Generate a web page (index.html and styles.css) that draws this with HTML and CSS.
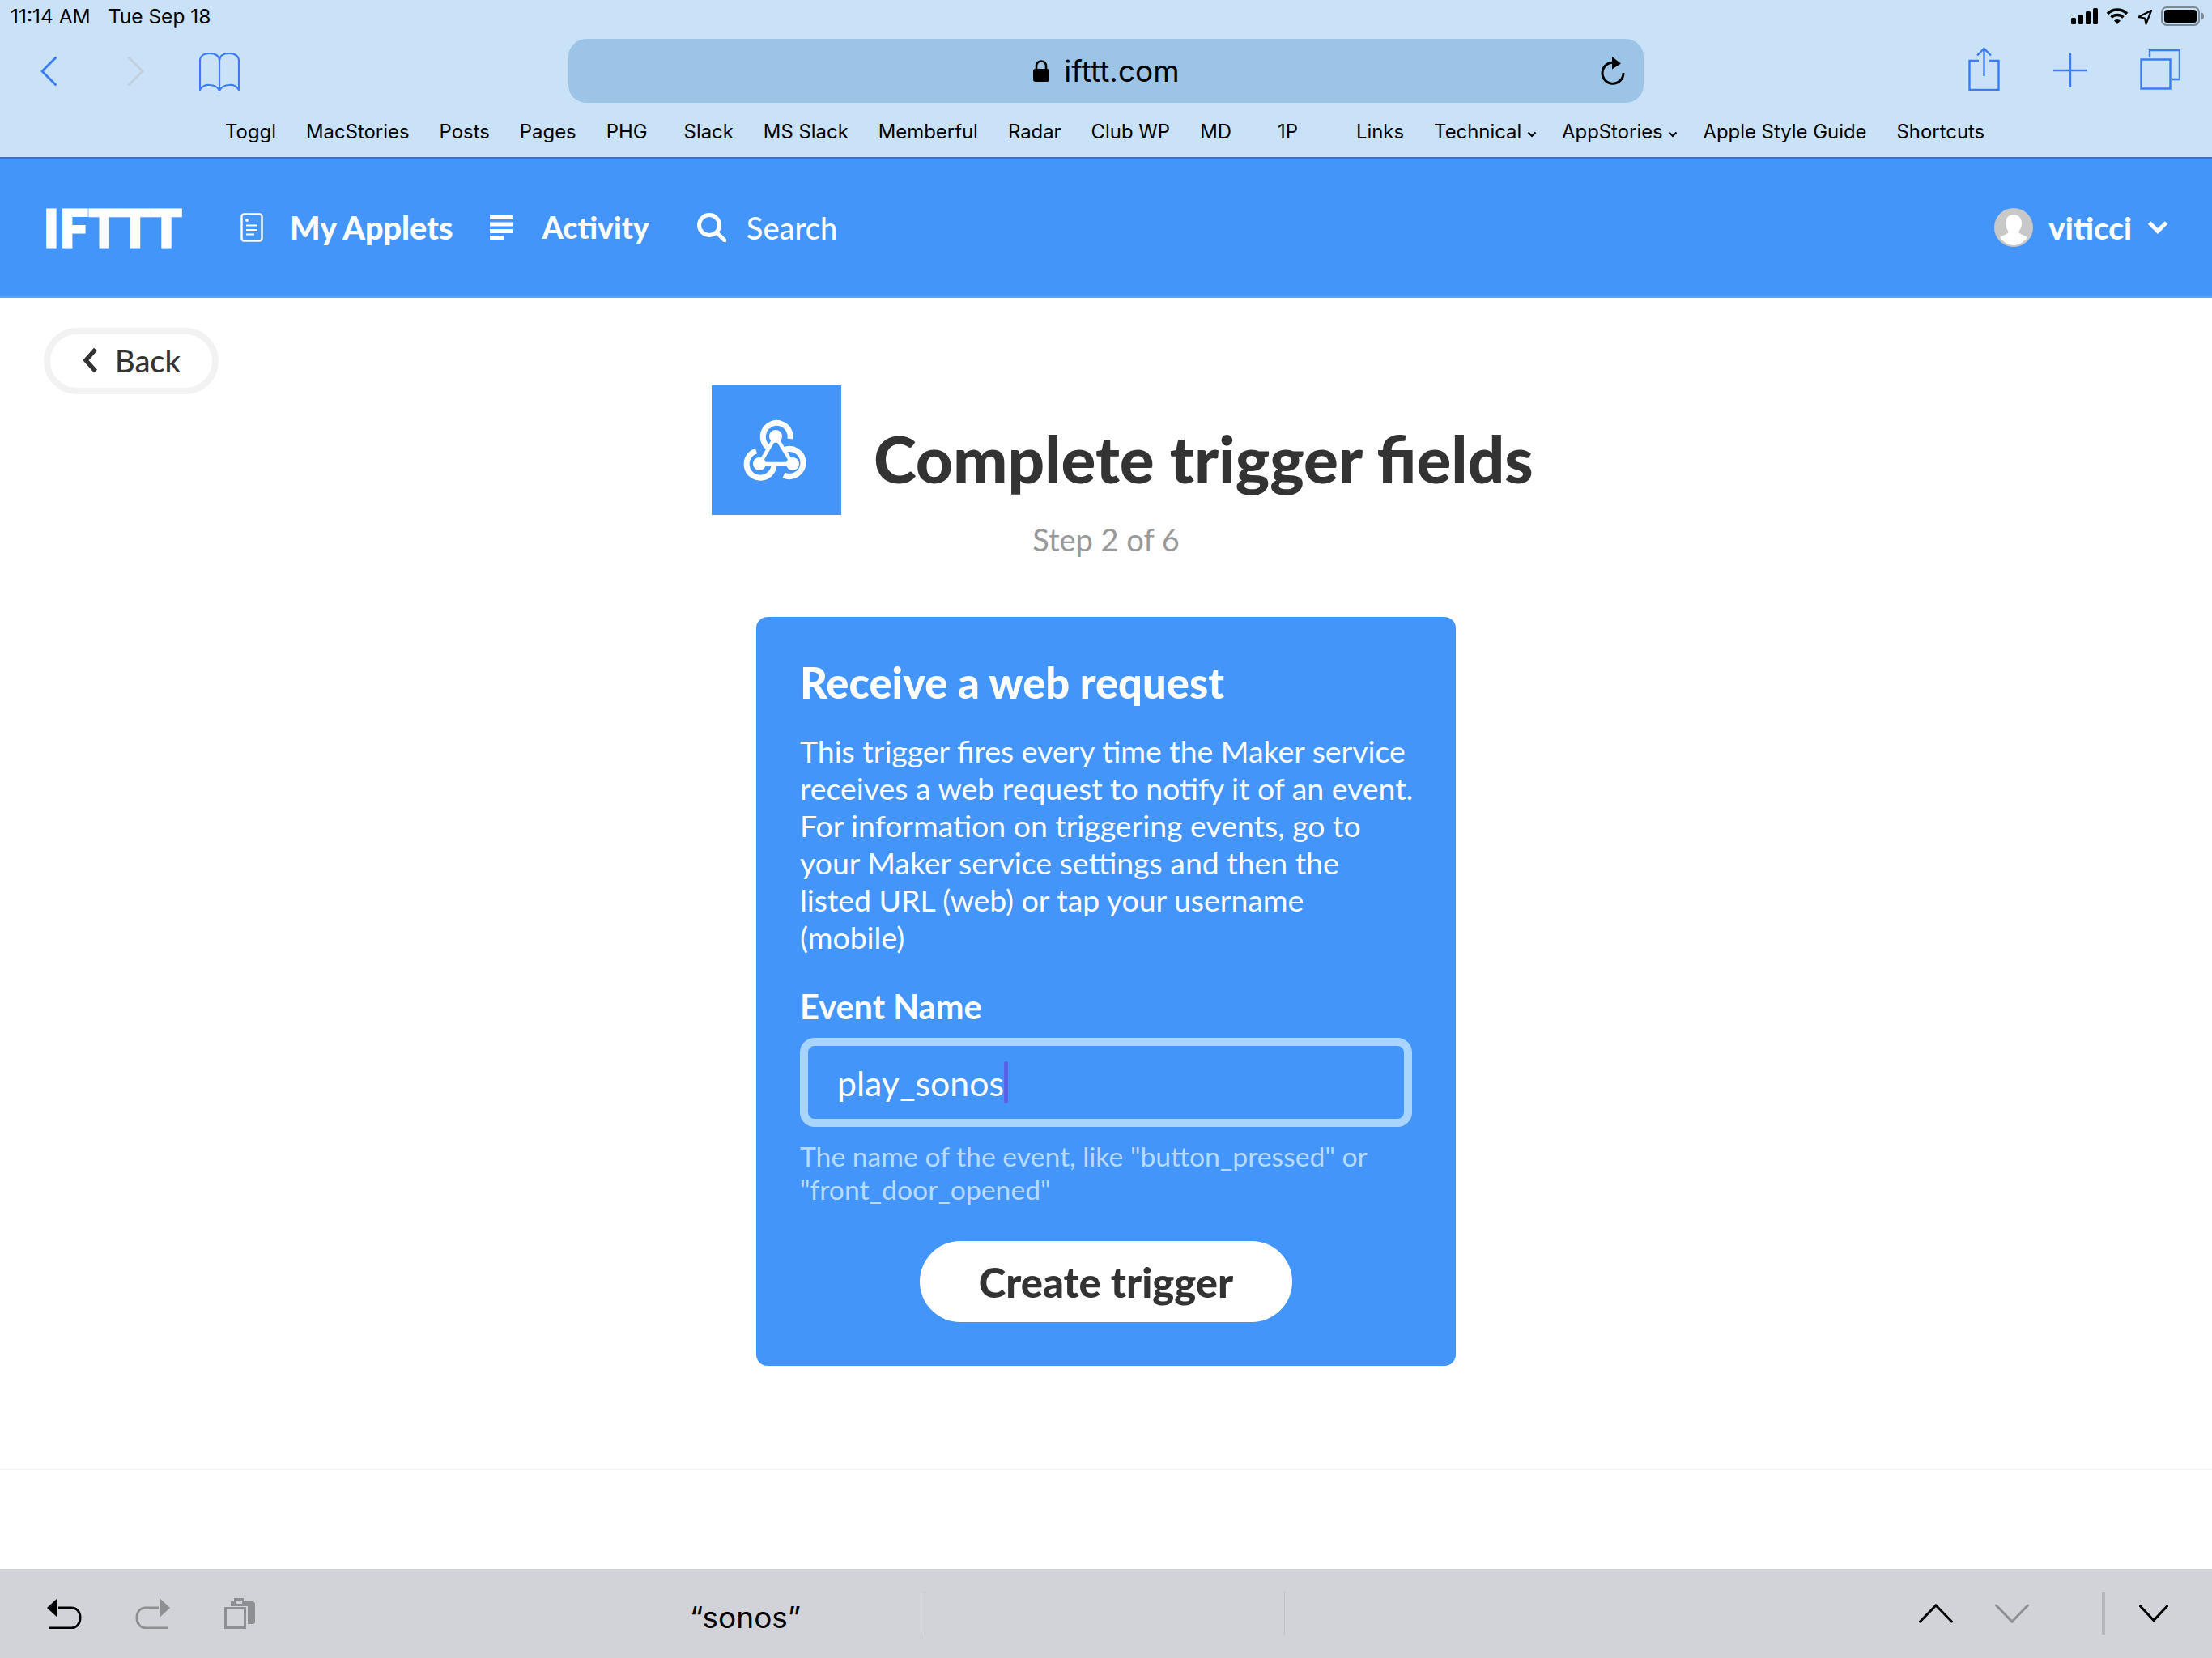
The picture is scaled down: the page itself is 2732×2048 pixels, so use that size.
FILE: index.html
```html
<!DOCTYPE html>
<html lang="en">
<head>
<meta charset="utf-8">
<title>Complete trigger fields - IFTTT</title>
<link rel="stylesheet" href="styles.css">
</head>
<body>
<div class="page">
  <header class="chrome">
    <div class="status">
      <span class="status-time">11:14 AM</span>
      <span class="status-date">Tue Sep 18</span>
      <svg class="status-icons" width="170" height="30" viewBox="2558 5 170 30">
        <rect x="2558" y="22" width="6" height="8" rx="1.5" fill="#000"/>
        <rect x="2567" y="18" width="6" height="12" rx="1.5" fill="#000"/>
        <rect x="2576" y="14" width="6" height="16" rx="1.5" fill="#000"/>
        <rect x="2585" y="10" width="6" height="20" rx="1.5" fill="#000"/>
        <path d="M2603 17a17 17 0 0 1 24 0M2607.500 21.500a11 11 0 0 1 15 0" fill="none" stroke="#000" stroke-width="3.600"/>
        <path d="M2611 25.500a6 6 0 0 1 8 0l-4 4.500z" fill="#000"/>
        <path d="M2657 13l-16 8 8 1.500 1.500 7z" fill="none" stroke="#000" stroke-width="2.200" stroke-linejoin="round"/>
        <rect x="2670" y="9" width="46" height="22" rx="6" fill="none" stroke="#7c8894" stroke-width="2"/>
        <rect x="2673" y="12" width="40" height="16" rx="3.500" fill="#000"/>
        <path d="M2719 15.500c2 .5 3 2 3 4.500s-1 4-3 4.500z" fill="#7c8894"/>
      </svg>
    </div>
    <div class="toolbar">
      <div class="tool-left">
        <svg class="ico-back" width="20" height="36" viewBox="0 0 20 36"><path d="M18.500 1.500L2 18l16.500 16.500" fill="none" stroke="#3b7cf4" stroke-width="3" stroke-linecap="round" stroke-linejoin="round"/></svg>
        <svg class="ico-forward" width="20" height="36" viewBox="0 0 20 36"><path d="M1.500 1.500L18 18 1.500 34.500" fill="none" stroke="#c3d0db" stroke-width="3" stroke-linecap="round" stroke-linejoin="round"/></svg>
        <svg class="ico-book" width="50" height="48" viewBox="0 0 50 48"><path d="M25 10c0-6-5-9-12-9S1 4 1 10v36c2-4 7-7 12-6 6 0 10 3 12 7 2-4 6-7 12-7 5-1 10 2 12 6V10c0-6-5-9-12-9s-12 3-12 9v37" fill="none" stroke="#3b7cf4" stroke-width="2.200" stroke-linejoin="round"/></svg>
      </div>
      <div class="urlbar">
        <div class="url-center">
          <svg width="22" height="27" viewBox="0 0 22 27"><path d="M5 12V7.500a6 6 0 0 1 12 0V12" fill="none" stroke="#000" stroke-width="2.600"/><rect x="1" y="11" width="20" height="16" rx="3" fill="#000"/></svg>
          <span class="url-text">ifttt.com</span>
        </div>
        <svg class="ico-reload" width="32" height="36" viewBox="0 0 32 36"><path d="M21.500 8.500A13 13 0 1 0 29 20" fill="none" stroke="#000" stroke-width="3"/><path d="M15 0l11 8.500-11 7z" fill="#000"/></svg>
      </div>
      <div class="tool-right">
        <svg class="ico-share" width="40" height="54" viewBox="0 0 40 54"><path d="M13 17H1.500v36h36V17H26M19.500 36V2M11 10.500l8.500-8.500 8.500 8.500" fill="none" stroke="#3b7cf4" stroke-width="2.400"/></svg>
        <svg class="ico-plus" width="42" height="42" viewBox="0 0 42 42"><path d="M21 0v42M0 21h42" stroke="#3b7cf4" stroke-width="2.400"/></svg>
        <svg class="ico-tabs" width="50" height="50" viewBox="0 0 50 50"><path d="M12 10V1h37v36h-9M1.500 12.500h36v36h-36z" fill="none" stroke="#3b7cf4" stroke-width="2.400"/></svg>
      </div>
    </div>
    <nav class="bookmarks">
      <span>Toggl</span><span>MacStories</span><span>Posts</span><span>Pages</span><span class="wide-gap">PHG</span><span>Slack</span><span>MS Slack</span><span>Memberful</span><span>Radar</span><span>Club WP</span><span class="short-md">MD</span><span class="short-1p">1P</span><span>Links</span>
      <span class="has-caret">Technical <svg width="12" height="8" viewBox="0 0 12 8"><path d="M1.500 1.500L6 6l4.500-4.500" fill="none" stroke="#000" stroke-width="2.200"/></svg></span>
      <span class="has-caret">AppStories <svg width="12" height="8" viewBox="0 0 12 8"><path d="M1.500 1.500L6 6l4.500-4.500" fill="none" stroke="#000" stroke-width="2.200"/></svg></span>
      <span>Apple Style Guide</span><span>Shortcuts</span>
    </nav>
  </header>

  <div class="sitenav">
    <span class="logo">IFTTT</span>
    <svg class="nav-doc" width="28" height="36" viewBox="0 0 28 36"><rect x="1.500" y="1.500" width="25" height="33" rx="3" fill="none" stroke="#fff" stroke-width="2.400"/><circle cx="8" cy="9" r="2" fill="#fff"/><path d="M7 15.500h14M7 21h14M7 26.500h10" stroke="#fff" stroke-width="2"/></svg>
    <a class="nav-link applets">My Applets</a>
    <svg class="nav-list" width="28" height="30" viewBox="0 0 28 30"><path d="M0 2.500h28M0 11h28M0 19.500h28M0 27.500h17" stroke="#fff" stroke-width="5"/></svg>
    <a class="nav-link activity">Activity</a>
    <svg class="nav-search" width="36" height="36" viewBox="0 0 36 36"><circle cx="15" cy="15" r="12.500" fill="none" stroke="#fff" stroke-width="5"/><path d="M24 24l10 10" stroke="#fff" stroke-width="5" stroke-linecap="round"/></svg>
    <a class="nav-search-text">Search</a>
    <div class="user">
      <svg width="48" height="48" viewBox="0 0 48 48"><circle cx="24" cy="24" r="24" fill="#c8c8c8"/><path d="M24 8c6 0 10 4 10 11 0 3-1 6-3 9-1 2 0 3 2 4l8 4c-4 6-10 10-17 10S11 42 7 36l8-4c2-1 3-2 2-4-2-3-3-6-3-9 0-7 4-11 10-11z" fill="#fff"/></svg>
      <span class="user-name">viticci</span>
      <svg width="26" height="18" viewBox="0 0 26 18"><path d="M2.500 3L13 13.500 23.500 3" fill="none" stroke="#fff" stroke-width="5"/></svg>
    </div>
  </div>

  <main class="content">
    <div class="head">
      <a class="back">
        <svg width="20" height="32" viewBox="0 0 20 32"><path d="M16 2.500L4 16l12 13.500" fill="none" stroke="#333" stroke-width="5.500"/></svg>
        <span>Back</span>
      </a>
      <div class="title-row">
        <div class="service-icon">
          <svg width="160" height="160" viewBox="0 0 160 160">
            <g fill="none" stroke="#fff">
              <g stroke-width="7">
                <path d="M97 66A17 17 0 1 0 70 77"/>
                <path d="M55 81A17 17 0 1 0 77 99"/>
                <path d="M89 111A17 17 0 1 0 89 80"/>
              </g>
              <path d="M79 63L59 97h41z" stroke-width="4.500" stroke-linejoin="round"/>
            </g>
            <g fill="#fff"><circle cx="79" cy="63" r="8"/><circle cx="59" cy="97" r="8"/><circle cx="100" cy="97" r="8"/></g>
          </svg>
        </div>
        <h1 class="title">Complete trigger fields</h1>
      </div>
    </div>
    <p class="step">Step 2 of 6</p>
    <section class="card">
      <h2 class="card-title">Receive a web request</h2>
      <p class="card-desc">This trigger fires every time the Maker service<br>receives a web request to notify it of an event.<br>For information on triggering events, go to<br>your Maker service settings and then the<br>listed URL (web) or tap your username<br>(mobile)</p>
      <div class="field-label">Event Name</div>
      <div class="input"><span>play_sonos</span><i class="caret"></i></div>
      <p class="hint">The name of the event, like "button_pressed" or<br>"front_door_opened"</p>
      <div class="actions"><button class="create">Create trigger</button></div>
    </section>
  </main>

  <div class="divider"></div>

  <footer class="kbd">
    <div class="kbd-left">
      <svg width="44" height="38" viewBox="0 0 44 38"><path d="M15 12h16c7 0 11 5 11 12s-4 13-11 13H3" fill="none" stroke="#000" stroke-width="3"/><path d="M14 0L1 12l13 12z" fill="#000"/></svg>
      <svg width="44" height="38" viewBox="0 0 44 38"><path d="M29 12H13C6 12 2 17 2 24s4 13 11 13h28" fill="none" stroke="#8e8f93" stroke-width="3"/><path d="M30 0l13 12-13 12z" fill="#8e8f93"/></svg>
      <svg width="38" height="38" viewBox="0 0 38 38"><rect x="1.500" y="12.500" width="24" height="24" fill="none" stroke="#8e8f93" stroke-width="3"/><path d="M8 10V4h4V0h12v4h10c3 0 4 2 4 4v20c0 3-1 4-3 4h-6v-2V10z" fill="#8e8f93"/><rect x="14" y="3" width="8" height="4" fill="#d1d3d9"/></svg>
    </div>
    <div class="suggestions">
      <span class="sug">“sonos”</span>
      <i class="sug-sep"></i>
      <span class="sug sug-empty"></span>
      <i class="sug-sep"></i>
    </div>
    <div class="kbd-right">
      <svg width="42" height="24" viewBox="0 0 42 24"><path d="M1.500 22L21 2l19.500 20" fill="none" stroke="#000" stroke-width="3" stroke-linecap="round"/></svg>
      <svg width="42" height="24" viewBox="0 0 42 24"><path d="M1.500 2L21 22 40.500 2" fill="none" stroke="#8e8f93" stroke-width="3" stroke-linecap="round"/></svg>
      <i class="kbd-sep"></i>
      <svg width="36" height="22" viewBox="0 0 36 22"><path d="M1.500 2L18 19.500 34.500 2" fill="none" stroke="#000" stroke-width="3" stroke-linecap="round"/></svg>
    </div>
  </footer>
</div>
</body>
</html>
```
FILE: styles.css
```css
* { box-sizing: border-box; }
html, body { margin: 0; padding: 0; background: #fff; }
body { font-family: Lato, "Noto Sans", sans-serif; color: #333; }
.page { width: 2732px; height: 2048px; display: flex; flex-direction: column; overflow: hidden; }

/* Safari chrome */
.chrome { height: 196px; background: #cae2f7; border-bottom: 2px solid #3a74b8; font-family: Inter, Roboto, sans-serif; color: #000; display: flex; flex-direction: column; }
.status { height: 40px; display: flex; align-items: center; padding: 0 4px 0 13px; font-size: 24.500px; }
.status-date { margin-left: 22px; }
.status-icons { margin-left: auto; }
.toolbar { height: 88px; padding-top: 8px; display: flex; align-items: flex-start; }
.tool-left { flex: 0 0 702px; height: 80px; padding-left: 50px; display: flex; align-items: center; gap: 88px; }
.ico-book { margin-left: -20px; margin-top: 2px; }
.urlbar { flex: 0 0 1328px; height: 79px; background: #9cc4e6; border-radius: 22px; display: flex; align-items: center; position: relative; justify-content: center; }
.url-center { display: flex; align-items: center; gap: 17px; font-size: 37px; }
.ico-reload { position: absolute; right: 22px; top: 22px; }
.tool-right { flex: 1; height: 80px; padding: 10px 0 0 401px; display: flex; align-items: flex-start; gap: 65px; }
.ico-plus { margin-top: 8px; }
.ico-tabs { margin-top: 3px; }
.bookmarks { height: 66px; display: flex; align-items: center; padding: 2px 0 0 278px; gap: 37px; font-size: 23.900px; white-space: nowrap; }
.bookmarks .wide-gap { margin-right: 8px; }
.bookmarks .short-md { margin-right: 20px; }
.bookmarks .short-1p { margin-right: 35px; }
.has-caret { margin-right: -6px; }
.has-caret svg { vertical-align: 1px; }

/* Site nav */
.sitenav { height: 172px; background: #4495f9; border-bottom: 2px solid #52a5fb; color: #fff; display: flex; align-items: center; padding: 0 54px; font-weight: 900; font-size: 39.500px; }
.logo { font-size: 62px; font-weight: 900; letter-spacing: 1px; width: 243px; line-height: 1; -webkit-text-stroke: 3px #fff; }
.nav-link { line-height: 1; }
.applets { margin-left: 33px; margin-right: 46px; }
.activity { margin-left: 36px; margin-right: 59px; font-size: 37.500px; }
.nav-search-text { margin-left: 25px; font-size: 38px; font-weight: 500; }
.user { margin-left: auto; display: flex; align-items: center; gap: 19px; }
.user-name { font-size: 38.500px; }

/* Content */
.content { flex: 1; display: flex; flex-direction: column; align-items: center; }
.head { width: 100%; display: grid; grid-template-columns: 825px auto; padding: 37px 0 0 54px; }
.back { justify-self: start; width: 216px; height: 82px; border: 8px solid #f2f2f2; border-radius: 41px; display: flex; align-items: center; gap: 20px; padding-left: 40px; padding-bottom: 2px; font-size: 38px; font-weight: 500; }
.title-row { display: flex; align-items: center; gap: 40px; margin-top: 71px; }
.service-icon { width: 160px; height: 160px; background: #4495f9; }
.service-icon svg { display: block; }
.title { margin: 20px 0 0; font-size: 80px; font-weight: 900; line-height: 1; color: #333; }
.step { margin: 8px 0 0; font-size: 38px; line-height: 44px; color: #999; }
.card { width: 864px; margin-top: 74px; height: 925px; padding: 54px; background: #4495f9; border-radius: 14px; color: #fff; }
.card-title { margin: 0; font-size: 52.500px; line-height: 54px; font-weight: 900; }
.card-desc { margin: 35px 0 0; font-size: 37.400px; line-height: 46px; white-space: nowrap; }
.field-label { margin-top: 38px; font-size: 41.500px; line-height: 48px; font-weight: 700; }
.input { margin-top: 15px; height: 110px; border: 10px solid #a9d4fd; border-radius: 18px; display: flex; align-items: center; padding-left: 36px; font-size: 42.800px; }
.caret { width: 5px; height: 52px; background: #5a63e8; border-radius: 2px; }
.hint { margin: 16px 0 0; font-size: 33.700px; line-height: 41px; color: #b8dafd; }
.actions { display: flex; justify-content: center; margin-top: 43px; }
.create { width: 460px; height: 100px; border: 0; border-radius: 50px; background: #fff; color: #333; font: 900 50.800px Lato, sans-serif; }
.divider { height: 2px; background: #f4f4f4; margin-bottom: 122px; }

/* Keyboard shortcut bar */
.kbd { height: 110px; background: #d1d3d9; display: flex; align-items: center; color: #000; font-family: Inter, Roboto, sans-serif; }
.kbd-left { width: 736px; padding-left: 57px; display: flex; gap: 66px; align-items: center; }
.suggestions { display: flex; align-items: center; }
.sug { font-size: 37px; width: 406px; padding: 8px 0 0 116px; }
.sug-empty { width: 443px; }
.sug-sep { width: 1px; height: 54px; background: #bfc1c6; }
.kbd-right { margin-left: auto; padding-right: 54px; display: flex; align-items: center; gap: 52px; }
.kbd-sep { width: 4px; height: 52px; background: #b5b6bb; margin: 0 -10px 0 38px; }
```
